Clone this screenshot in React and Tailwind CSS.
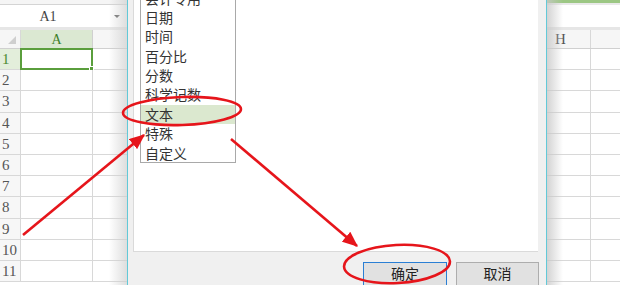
import React from 'react'

const ROWS = [1, 2, 3, 4, 5, 6, 7, 8, 9, 10, 11]
const FORMATS = ['会计专用', '日期', '时间', '百分比', '分数', '科学记数', '文本', '特殊', '自定义']
const cjk = { fontFamily: '"Noto Sans CJK SC", "Noto Sans", sans-serif' }
const serif = { fontFamily: '"Liberation Serif", "DejaVu Serif", serif' }

function LeftSheet() {
  return (
    <div className="w-[127px] shrink-0 flex flex-col relative bg-white">
      <div className="h-[5px] bg-[#f5f5f5] border-b border-[#d4d4d4]" />
      <div className="h-[22px] flex items-center">
        <div className="w-[96px] text-center text-[14px] text-[#444]" style={serif}>A1</div>
        <div className="flex-1 flex justify-end pr-[7px]">
          <div className="w-0 h-0 border-x-[3px] border-x-transparent border-t-[3px] border-t-[#666]" />
        </div>
      </div>
      <div className="h-[3px] bg-[#e6e6e6]" />
      <div className="h-[19px] flex border-b border-[#d0d0d0] bg-[#f6f6f6]">
        <div className="w-[21px] shrink-0 border-r border-[#d8d8d8] flex items-end justify-end pr-[4px] pb-[4px]">
          <div className="w-0 h-0 border-l-[8px] border-l-transparent border-b-[8px] border-b-[#cfcfcf]" />
        </div>
        <div className="w-[72px] shrink-0 border-r border-[#d0d0d0] bg-[#dbe8d2] text-[#3f7f2a] text-[14px] text-center leading-[19px]" style={serif}>A</div>
        <div className="flex-1" />
      </div>
      {ROWS.map((r) => (
        <div key={r} className="h-[21.2px] shrink-0 flex border-b border-[#d8d8d8]">
          <div
            className={`w-[21px] shrink-0 border-r border-[#d8d8d8] text-[15px] leading-[20px] pl-[2px] ${r === 1 ? 'bg-[#e3eedb] text-[#4a8a32]' : 'bg-[#f7f7f7] text-[#555]'}`}
            style={serif}
          >
            {r}
          </div>
          <div className="w-[72px] shrink-0 border-r border-[#d8d8d8] relative">
            {r === 1 && (
              <div className="absolute -left-[1px] -top-[1px] w-[73px] h-[22px] border-2 border-[#5a9e3c]">
                <div className="absolute -right-[3px] -bottom-[3px] w-[5px] h-[5px] bg-[#5a9e3c] border border-white" />
              </div>
            )}
          </div>
          <div className="flex-1" />
        </div>
      ))}
      <div className="absolute right-0 top-0 bottom-0 w-[18px] bg-gradient-to-l from-[#cfcfcf]/70 to-transparent" />
    </div>
  )
}

function RightSheet() {
  return (
    <div className="flex-1 flex flex-col relative bg-white">
      <div className="h-[3px] bg-[#9cc784]" />
      <div className="h-[2px] bg-[#e9e9e9]" />
      <div className="h-[22px]" />
      <div className="h-[3px] bg-[#e6e6e6]" />
      <div className="h-[19px] flex border-b border-[#d0d0d0] bg-[#f6f6f6]">
        <div className="w-[44px] shrink-0 border-r border-[#d8d8d8] text-[15px] text-[#555] leading-[19px] pl-[8px]" style={serif}>H</div>
        <div className="flex-1" />
      </div>
      {ROWS.map((r) => (
        <div key={r} className="h-[21.2px] shrink-0 flex border-b border-[#d8d8d8]">
          <div className="w-[44px] shrink-0 border-r border-[#d8d8d8]" />
          <div className="flex-1" />
        </div>
      ))}
      <div className="absolute left-0 top-0 bottom-0 w-[16px] bg-gradient-to-r from-[#c8c8c8]/80 to-transparent" />
    </div>
  )
}

function Dialog() {
  return (
    <div className="w-[420px] shrink-0 flex flex-col bg-[#f0f0f0] border-x border-[#62c9d8]" style={cjk}>
      <div className="ml-[5px] w-[405px] h-[252px] shrink-0 bg-white border-l border-b border-[#dadada] overflow-hidden">
        <div className="ml-[6px] w-[96px] h-[163px] border-x border-b border-[#a9a9a9] overflow-hidden">
          <div className="-mt-[11.5px]">
            {FORMATS.map((f) => (
              <div
                key={f}
                className={`h-[19.4px] pl-[4px] text-[14px] leading-[19.4px] text-[#333] ${f === '文本' ? 'bg-[#dbe8cf]' : ''}`}
              >
                {f}
              </div>
            ))}
          </div>
        </div>
      </div>
      <div className="mt-[10px] flex justify-end gap-[9px] pr-[7px]">
        <button className="w-[84px] h-[24px] pb-[3px] bg-[#e1e1e1] border border-[#2a7fd4] text-[14px] leading-[18px] text-[#222]">确定</button>
        <button className="w-[83px] h-[24px] pb-[3px] bg-[#e1e1e1] border border-[#adadad] text-[14px] leading-[18px] text-[#222]">取消</button>
      </div>
    </div>
  )
}

export default function App() {
  return (
    <div className="w-[620px] h-[285px] relative overflow-hidden flex bg-white">
      <LeftSheet />
      <Dialog />
      <RightSheet />
      <svg className="absolute inset-0 pointer-events-none" width="620" height="285" viewBox="0 0 620 285">
        <defs>
          <marker id="head" viewBox="0 0 12 10" refX="11" refY="5" markerWidth="16" markerHeight="13" markerUnits="userSpaceOnUse" orient="auto">
            <path d="M0,0 L12,5 L0,10 z" fill="#e6151b" />
          </marker>
        </defs>
        <line x1="23" y1="235" x2="144" y2="135" stroke="#e6151b" strokeWidth="2.6" markerEnd="url(#head)" />
        <line x1="231" y1="139" x2="357" y2="246" stroke="#e6151b" strokeWidth="2.6" markerEnd="url(#head)" />
        <ellipse cx="182" cy="111" rx="59" ry="14" transform="rotate(-2 182 111)" fill="none" stroke="#e6151b" strokeWidth="2.6" />
        <ellipse cx="397" cy="264" rx="53" ry="19" transform="rotate(-3 397 264)" fill="none" stroke="#e6151b" strokeWidth="2.6" />
      </svg>
    </div>
  )
}
